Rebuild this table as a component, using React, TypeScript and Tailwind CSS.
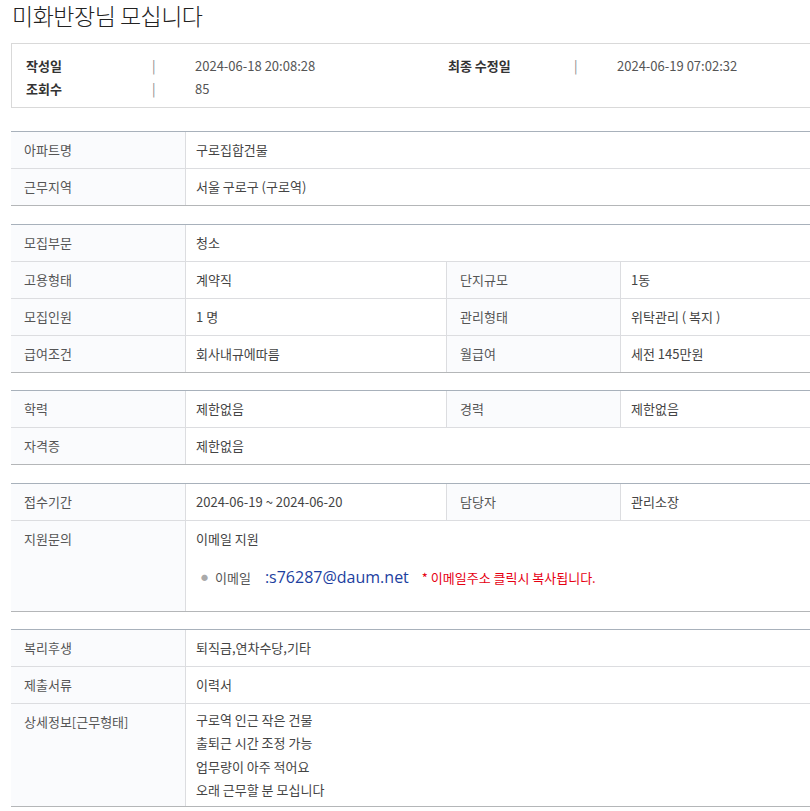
import React from 'react';

type Cell = { label: string; value: React.ReactNode };
type Row = Cell[];

const font = { fontFamily: '"Noto Sans CJK KR", "Noto Sans", sans-serif' };

// One bordered block of rows; a row has one or two label/value pairs
const InfoTable: React.FC<{ rows: Row[]; className?: string }> = ({ rows, className }) => (
  <div className={`border-t border-t-[#a8b1bb] border-b border-b-[#b4b6b8] ${className ?? ''}`}>
    {rows.map((row, i) => (
      <div
        key={i}
        className={`flex ${i > 0 ? 'border-t border-[#dcdde0]' : ''}`}
      >
        {row.map((cell, j) => (
          <React.Fragment key={j}>
            <div
              className={`w-[174px] shrink-0 bg-[#fafbfd] pl-[13px] flex items-start pt-[8px] pb-[9px] text-[13px] leading-[19px] text-[#555] ${
                j > 0 ? 'border-l border-[#dcdde0]' : ''
              }`}
            >
              {cell.label}
            </div>
            <div
              className={`border-l border-[#dcdde0] pl-[10px] pt-[8px] pb-[9px] text-[13px] leading-[19px] text-[#444] ${
                row.length > 1 && j === 0 ? 'w-[261px] shrink-0' : 'flex-1'
              }`}
            >
              {cell.value}
            </div>
          </React.Fragment>
        ))}
      </div>
    ))}
  </div>
);

const App: React.FC = () => {
  return (
    <div className="w-full overflow-x-hidden bg-white" style={font}>
      <div className="w-[900px] pl-[11px] pb-4">
        <h1 className="pl-[1px] text-[23px] leading-[30px] font-light text-[#222] tracking-[-0.5px]">
          미화반장님 모십니다
        </h1>

        {/* 작성 정보 */}
        <div className="mt-[13px] border border-[#d9d9d9] pl-[14px] pt-[10px] pb-[7px] text-[13px] leading-[23px]">
          <div className="grid grid-cols-[126px_43px_253px_126px_43px_1fr]">
            <span className="font-bold text-[#333]">작성일</span>
            <span className="text-[#888]">|</span>
            <span className="text-[#555]">2024-06-18 20:08:28</span>
            <span className="font-bold text-[#333]">최종 수정일</span>
            <span className="text-[#888]">|</span>
            <span className="text-[#555]">2024-06-19 07:02:32</span>
            <span className="font-bold text-[#333]">조회수</span>
            <span className="text-[#888]">|</span>
            <span className="text-[#555]">85</span>
          </div>
        </div>

        <InfoTable
          className="mt-[23px]"
          rows={[
            [{ label: '아파트명', value: '구로집합건물' }],
            [{ label: '근무지역', value: '서울  구로구 (구로역)' }],
          ]}
        />

        <InfoTable
          className="mt-[18px]"
          rows={[
            [{ label: '모집부문', value: '청소' }],
            [
              { label: '고용형태', value: '계약직' },
              { label: '단지규모', value: '1동' },
            ],
            [
              { label: '모집인원', value: '1 명' },
              { label: '관리형태', value: '위탁관리 ( 복지 )' },
            ],
            [
              { label: '급여조건', value: '회사내규에따름' },
              { label: '월급여', value: '세전 145만원' },
            ],
          ]}
        />

        <InfoTable
          className="mt-[17px]"
          rows={[
            [
              { label: '학력', value: '제한없음' },
              { label: '경력', value: '제한없음' },
            ],
            [{ label: '자격증', value: '제한없음' }],
          ]}
        />

        <InfoTable
          className="mt-[18px]"
          rows={[
            [
              { label: '접수기간', value: '2024-06-19 ~ 2024-06-20' },
              { label: '담당자', value: '관리소장' },
            ],
            [
              {
                label: '지원문의',
                value: (
                  <div className="pb-[15px]">
                    <p>이메일 지원</p>
                    <p className="mt-[20px] flex items-center pl-[5px]">
                      <span className="text-[#aaa] text-[7px] mr-[7px]">●</span>
                      <span className="text-[#555]">이메일</span>
                      <span className="ml-[14px] text-[#1d3f9f] text-[16px]" style={{ fontFamily: '"Open Sans", "Noto Sans", sans-serif' }}>
                        :s76287@daum.net
                      </span>
                      <span className="ml-[13px] text-[#e60012]">* 이메일주소 클릭시 복사됩니다.</span>
                    </p>
                  </div>
                ),
              },
            ],
          ]}
        />

        <InfoTable
          className="mt-[17px]"
          rows={[
            [{ label: '복리후생', value: '퇴직금,연차수당,기타' }],
            [{ label: '제출서류', value: '이력서' }],
            [
              {
                label: '상세정보[근무형태]',
                value: (
                  <div className="leading-[23.3px] -mt-[4px] -mb-[4px]">
                    <p>구로역 인근 작은 건물</p>
                    <p>출퇴근 시간 조정 가능</p>
                    <p>업무량이 아주 적어요</p>
                    <p>오래 근무할 분 모십니다</p>
                  </div>
                ),
              },
            ],
          ]}
        />
      </div>
    </div>
  );
};

export default App;
